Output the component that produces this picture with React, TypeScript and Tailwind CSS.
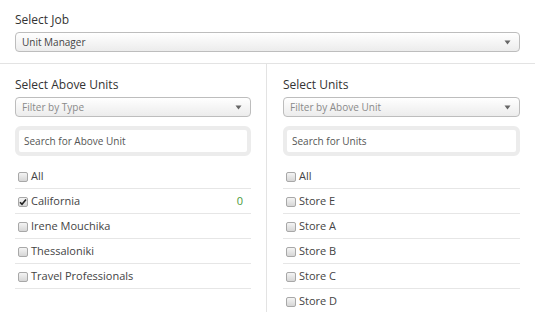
const font = { fontFamily: '"Open Sans", "Noto Sans", sans-serif' };

function Caret() {
  return (
    <svg width="7" height="5" viewBox="0 0 7 5" className="shrink-0">
      <path d="M0.5 0.5 L6.5 0.5 L3.5 4.5 Z" fill="#666" />
    </svg>
  );
}

function Dropdown({ text, muted }: { text: string; muted?: boolean }) {
  return (
    <div
      className={`flex h-[20px] items-center justify-between rounded-[4px] border border-[#bdbdbd] bg-gradient-to-b from-white to-[#ececec] pl-[6px] pr-[8px] text-[10px] ${
        muted ? "text-[#8a8a8a]" : "text-[#444]"
      }`}
    >
      <span>{text}</span>
      <Caret />
    </div>
  );
}

function Search({ placeholder }: { placeholder: string }) {
  return (
    <div className="mt-[9px] rounded-[6px] border-[4px] border-[#ececec] bg-white">
      <div className="flex h-[22px] items-center px-[5px] text-[10px] text-[#555]">{placeholder}</div>
    </div>
  );
}

function Box({ checked }: { checked?: boolean }) {
  return (
    <span className="flex h-[10px] w-[10px] shrink-0 items-center justify-center rounded-[2px] border border-[#a8a8a8] bg-gradient-to-b from-[#f4f4f4] to-[#d6d6d6]">
      {checked && (
        <svg width="8" height="8" viewBox="0 0 8 8">
          <path d="M1 4.2 L3 6.3 L7 1.5" stroke="#222" strokeWidth="1.6" fill="none" />
        </svg>
      )}
    </span>
  );
}

function Row({ label, checked, count }: { label: string; checked?: boolean; count?: string }) {
  return (
    <div className="flex h-[25px] items-center border-b border-[#e6e6e6] pl-[3px] pr-[8px] pt-[1px] text-[11px] text-[#444]">
      <Box checked={checked} />
      <span className="ml-[3px] flex-1">{label}</span>
      {count && <span className="text-[#4a9a3a]">{count}</span>}
    </div>
  );
}

export default function App() {
  const above = ["All", "California", "Irene Mouchika", "Thessaloniki", "Travel Professionals"];
  const units = ["All", "Store E", "Store A", "Store B", "Store C", "Store D"];

  return (
    <div className="h-[312px] w-[535px] overflow-hidden bg-white" style={font}>
      <div className="border-b border-[#e3e3e3] px-[15px] pb-[11px] pt-[11px]">
        <div className="h-[17px] text-[12px] leading-[17px] text-[#333]">Select Job</div>
        <div className="mt-[4px]">
          <Dropdown text="Unit Manager" />
        </div>
      </div>

      <div className="grid grid-cols-[267px_1fr]">
        <div className="border-r border-[#e3e3e3] pl-[15px] pr-[15px] pt-[12px]">
          <div className="h-[17px] text-[12px] leading-[17px] text-[#333]">Select Above Units</div>
          <div className="mt-[4px]">
            <Dropdown text="Filter by Type" muted />
          </div>
          <Search placeholder="Search for Above Unit" />
          <div className="mt-[8px]">
            {above.map((l) => (
              <Row key={l} label={l} checked={l === "California"} count={l === "California" ? "0" : undefined} />
            ))}
          </div>
        </div>

        <div className="pl-[16px] pr-[15px] pt-[12px]">
          <div className="h-[17px] text-[12px] leading-[17px] text-[#333]">Select Units</div>
          <div className="mt-[4px]">
            <Dropdown text="Filter by Above Unit" muted />
          </div>
          <Search placeholder="Search for Units" />
          <div className="mt-[8px]">
            {units.map((l) => (
              <Row key={l} label={l} />
            ))}
          </div>
        </div>
      </div>
    </div>
  );
}
